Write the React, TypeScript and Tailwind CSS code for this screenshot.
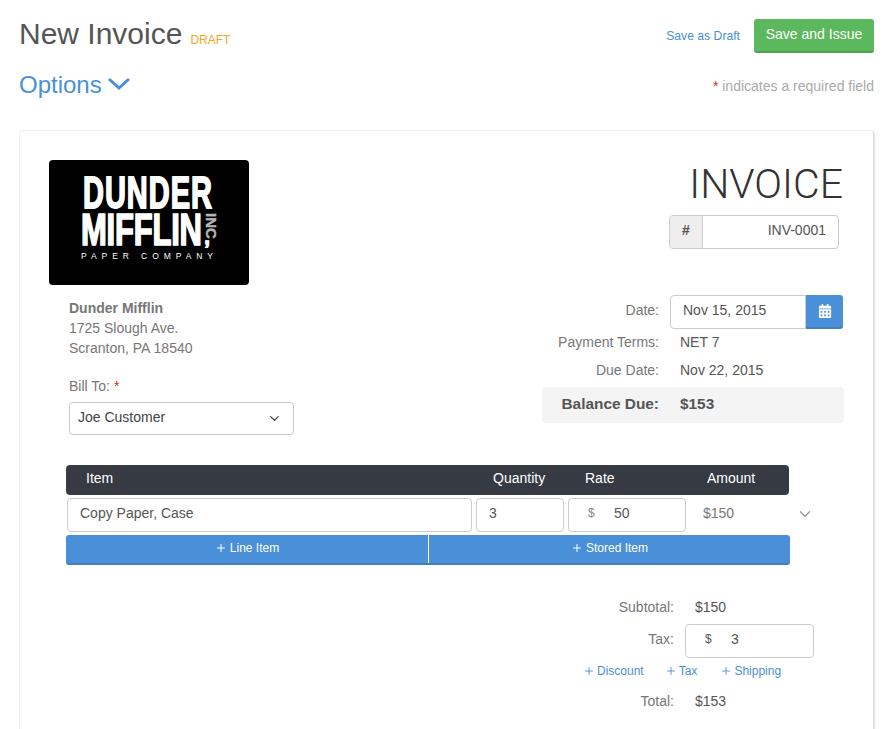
import React from "react";
import { ChevronDown, Plus } from "lucide-react";
import { FaCalendarAlt } from "react-icons/fa";

function Logo() {
  return (
    <div className="h-[125px] w-[200px] rounded-[4px] bg-black">
      <svg width="200" height="125" viewBox="0 0 200 125">
        <g fontFamily='"Liberation Sans", Arial, sans-serif' fontWeight="700" fill="#fff">
          <text transform="translate(34 48) scale(1 1.5)" fontSize="29" textLength="129" lengthAdjust="spacing" stroke="#fff" strokeWidth="1.2">
            DUNDER
          </text>
          <text transform="translate(32 85) scale(1 1.42)" fontSize="31" textLength="121" lengthAdjust="spacing" stroke="#fff" strokeWidth="1.2">
            MIFFLIN
          </text>
          <text x="155" y="84" fontSize="22" stroke="#fff" strokeWidth="1">
            ,
          </text>
          <text transform="translate(157 53) rotate(90)" fontSize="15" fill="#b5b5b5" stroke="#b5b5b5" strokeWidth="0.4">
            INC
          </text>
        </g>
        <text x="32" y="99" fontFamily='"Liberation Sans", Arial, sans-serif' fontSize="8.5" fill="#fff" textLength="132">
          PAPER COMPANY
        </text>
      </svg>
    </div>
  );
}

function TotalRow({ label, value }: { label: string; value: string }) {
  return (
    <div className="flex h-[30px] items-center">
      <span className="w-[105px] text-right text-[#777]">{label}</span>
      <span className="ml-[21px] text-[#555]">{value}</span>
    </div>
  );
}

function AddLink({ label, className }: { label: string; className: string }) {
  return (
    <a href="#" className={`flex items-center gap-[2px] text-[12px] text-[#4a90d9] ${className}`}>
      <Plus size={12} strokeWidth={1.8} />
      {label}
    </a>
  );
}

function App() {
  return (
    <div
      className="h-[729px] w-[885px] overflow-hidden bg-white pl-[19px] pr-[11px] text-[14px] text-[#555]"
      style={{ fontFamily: '"Liberation Sans", Arial, sans-serif' }}
    >
      <div className="flex h-[71px] items-start justify-between pt-[19px]">
        <div className="flex items-baseline">
          <h1 className="text-[30px] leading-[30px] text-[#555]">New Invoice</h1>
          <span className="ml-[8px] text-[12px] text-[#f5a623]">DRAFT</span>
        </div>
        <div className="flex items-center">
          <a href="#" className="mr-[14px] mt-[1px] text-[12.2px] text-[#4a90d9]">
            Save as Draft
          </a>
          <button className="h-[34px] w-[120px] rounded-[3px] border-b-2 border-[#4ea34e] bg-[#5cb85c] pb-[1px] text-white">
            Save and Issue
          </button>
        </div>
      </div>

      <div className="flex h-[40px] items-start justify-between">
        <a href="#" className="flex items-center text-[24px] leading-[28px] text-[#4a90d9]">
          Options
          <svg width="24" height="14" viewBox="0 0 24 14" className="ml-[5px] mb-[2px]" fill="none" stroke="#4a90d9" strokeWidth="3">
            <path d="M2 2l10 9 10-9" />
          </svg>
        </a>
        <p className="mt-[5px] text-[14px] text-[#aaa]">
          <span className="text-[#c9302c]">*</span> indicates a required field
        </p>
      </div>

      <div className="mt-[19px] h-[620px] rounded-[4px] border border-[#f2f2f2] border-r-[#ddd] px-[29px] pt-[29px] shadow-[1px_1px_2px_rgba(0,0,0,0.12)]">
        <div className="flex justify-between">
          <div className="w-[260px]">
            <Logo />
            <div className="ml-[20px] mt-[13px] leading-[20px] text-[#777]">
              <p className="font-bold">Dunder Mifflin</p>
              <p>1725 Slough Ave.</p>
              <p>Scranton, PA 18540</p>
              <p className="mt-[18px]">
                Bill To: <span className="text-[#c9302c]">*</span>
              </p>
              <div className="mt-[6px] flex h-[33px] w-[225px] items-center justify-between rounded-[4px] border border-[#ccc] pb-[4px] pl-[8px] pr-[11px] text-[#444]">
                Joe Customer
                <ChevronDown size={15} strokeWidth={2} className="mt-[3px] text-[#444]" />
              </div>
            </div>
          </div>

          <div className="w-[302px]">
            <h2 className="pr-[1px] pt-[1px] text-right font-['Roboto'] text-[41px] font-light leading-[47px] text-[#333]">INVOICE</h2>
            <div className="ml-[127px] mt-[7px] flex h-[34px] w-[170px] overflow-hidden rounded-[4px] border border-[#ccc]">
              <span className="flex w-[33px] items-center justify-center border-r border-[#ccc] bg-[#eee] pb-[4px] font-bold text-[#555]">#</span>
              <span className="flex flex-1 items-center justify-end pb-[4px] pr-[12px] text-[#555]">INV-0001</span>
            </div>

            <div className="mt-[46px] flex h-[34px]">
              <span className="w-[117px] self-center pb-[4px] text-right text-[#777]">Date:</span>
              <div className="ml-[11px] flex w-[136px] items-center rounded-l-[4px] border border-[#ccc] pb-[4px] pl-[12px]">Nov 15, 2015</div>
              <button className="flex w-[37px] items-center justify-center rounded-r-[3px] border-b-2 border-[#3f7fc4] bg-[#4a90d9] text-white">
                <FaCalendarAlt size={14} />
              </button>
            </div>
            <div className="flex h-[27px] items-end pb-[3px]">
              <span className="w-[117px] text-right text-[#777]">Payment Terms:</span>
              <span className="ml-[21px]">NET 7</span>
            </div>
            <div className="flex h-[28px] items-end pb-[3px]">
              <span className="w-[117px] text-right text-[#777]">Due Date:</span>
              <span className="ml-[21px]">Nov 22, 2015</span>
            </div>
            <div className="mt-[3px] flex h-[36px] items-center rounded-[4px] bg-[#f4f4f4] pb-[3px] text-[15.4px] font-bold">
              <span className="w-[117px] text-right">Balance Due:</span>
              <span className="ml-[21px]">$153</span>
            </div>
          </div>
        </div>

        <div className="ml-[17px] mt-[30px] w-[760px]">
          <div className="flex h-[30px] w-[723px] items-center rounded-[4px] bg-[#363a43] pb-[4px] text-white">
            <span className="ml-[20px] w-[407px]">Item</span>
            <span className="w-[92px]">Quantity</span>
            <span className="w-[122px]">Rate</span>
            <span>Amount</span>
          </div>
          <div className="mt-[3px] flex h-[34px] items-center">
            <div className="ml-[1px] flex h-full w-[405px] items-center rounded-[4px] border border-[#ccc] pb-[4px] pl-[12px]">Copy Paper, Case</div>
            <div className="ml-[4px] flex h-full w-[88px] items-center rounded-[4px] border border-[#ccc] pb-[4px] pl-[12px]">3</div>
            <div className="ml-[4px] flex h-full w-[118px] items-center rounded-[4px] border border-[#ccc] pb-[4px] pl-[19px]">
              <span className="w-[26px] text-[12px] text-[#888]">$</span>50
            </div>
            <span className="mb-[4px] ml-[17px] w-[93px] text-[#777]">$150</span>
            <ChevronDown size={18} strokeWidth={1.8} className="mb-[3px] text-[#999]" />
          </div>
          <div className="mt-[3px] flex h-[30px] w-[724px] overflow-hidden rounded-[3px] border-b-2 border-[#3f7fc4] bg-[#4a90d9] text-[12px] text-white">
            <div className="flex w-[363px] items-center justify-center gap-[3px] border-r border-white pb-[2px]">
              <Plus size={12} strokeWidth={2} />
              Line Item
            </div>
            <div className="flex flex-1 items-center justify-center gap-[3px] pb-[2px]">
              <Plus size={12} strokeWidth={2} />
              Stored Item
            </div>
          </div>
        </div>

        <div className="ml-[520px] mt-[27px] w-[300px]">
          <TotalRow label="Subtotal:" value="$150" />
          <div className="mt-[2px] flex h-[34px] items-center">
            <span className="mb-[4px] w-[105px] text-right text-[#777]">Tax:</span>
            <div className="ml-[11px] flex h-full w-[129px] items-center rounded-[4px] border border-[#ccc] pb-[4px] pl-[19px]">
              <span className="w-[26px] text-[12px]">$</span>3
            </div>
          </div>
          <div className="mt-[4px] flex h-[17px] items-center">
            <AddLink label="Discount" className="ml-[14px]" />
            <AddLink label="Tax" className="ml-[21px]" />
            <AddLink label="Shipping" className="ml-[23px]" />
          </div>
          <div className="mt-[7px]">
            <TotalRow label="Total:" value="$153" />
          </div>
        </div>
      </div>
    </div>
  );
}

export default App;
